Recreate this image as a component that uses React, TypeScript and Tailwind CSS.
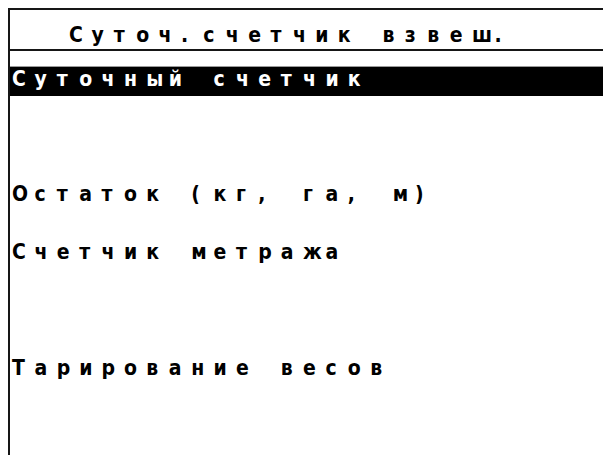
const menuRows: { label: string; selected?: boolean }[] = [
  { label: "Суточный счетчик", selected: true },
  { label: "" },
  { label: "Остаток (кг, га, м)" },
  { label: "Счетчик метража" },
  { label: "" },
  { label: "Тарирование весов" },
];

const lcdFont = {
  fontFamily: '"DejaVu Sans Condensed", "DejaVu Sans", sans-serif',
};

// LCD text: every character sits in a fixed-width cell
function LcdText({ text }: { text: string }) {
  return (
    <div className="flex h-[25px] text-[21px] leading-[25px] font-bold">
      {Array.from(text).map((ch, i) => (
        <span key={i} className="w-[22.4px] shrink-0 whitespace-pre">
          {ch}
        </span>
      ))}
    </div>
  );
}

export default function App() {
  return (
    <div className="w-[603px] h-[455px] bg-white pt-[8px] pl-[8px] overflow-hidden">
      <div
        className="h-full border-l-2 border-t-2 border-[#161616] flex flex-col"
        style={lcdFont}
      >
        {/* screen title */}
        <div className="h-[41px] pt-[13px] pl-[59px] border-b-2 border-[#161616] text-black">
          <LcdText text="Суточ.счетчик взвеш." />
        </div>

        {/* menu entries */}
        <div className="pt-[15px] flex flex-col">
          {menuRows.map((row, i) => (
            <div key={i} className="h-[58px]">
              <div
                className={
                  row.selected
                    ? "h-[30px] bg-black text-white pl-[2px] border-t border-[#9a9a9a]"
                    : "h-[30px] text-black pl-[2px]"
                }
              >
                <LcdText text={row.label} />
              </div>
            </div>
          ))}
        </div>
      </div>
    </div>
  );
}
